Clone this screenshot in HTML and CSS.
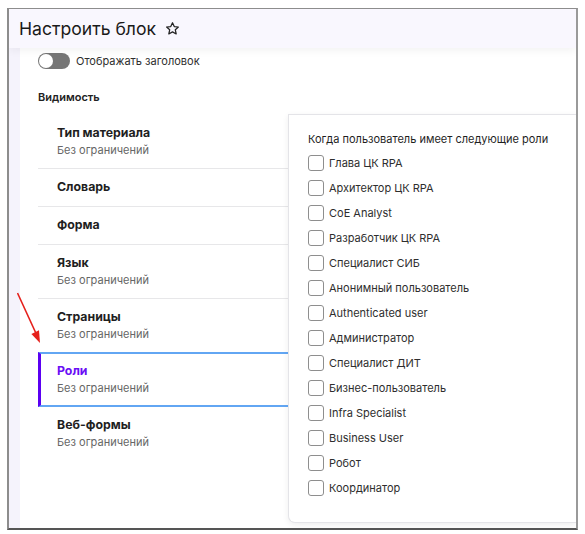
FILE: index.html
```html
<!DOCTYPE html>
<html lang="ru">
<head>
<meta charset="utf-8">
<link rel="stylesheet" href="styles.css">
</head>
<body>
<div class="frame">
  <header class="header">
    <h1 class="title">Настроить блок</h1>
    <svg class="star" width="15" height="15" viewBox="0 0 24 24"><path d="M12 2.8l2.8 6.1 6.6.7-4.9 4.5 1.4 6.6L12 17.4l-5.9 3.3 1.4-6.6-4.9-4.5 6.6-.7z" fill="none" stroke="#222" stroke-width="2" stroke-linejoin="round"/></svg>
  </header>
  <div class="body">
    <div class="strip"></div>
    <main class="main">
      <div class="toggle-row">
        <span class="toggle"><span class="knob"></span></span>
        <span class="toggle-label">Отображать заголовок</span>
      </div>
      <div class="section-title">Видимость</div>
      <div class="tabs-wrap">
        <ul class="tabs">
          <li class="tab"><div class="tab-title">Тип материала</div><div class="tab-sub">Без ограничений</div></li>
          <li class="tab"><div class="tab-title">Словарь</div></li>
          <li class="tab"><div class="tab-title">Форма</div></li>
          <li class="tab"><div class="tab-title">Язык</div><div class="tab-sub">Без ограничений</div></li>
          <li class="tab"><div class="tab-title">Страницы</div><div class="tab-sub">Без ограничений</div></li>
          <li class="tab active"><div class="tab-title">Роли</div><div class="tab-sub">Без ограничений</div></li>
          <li class="tab last"><div class="tab-title">Веб-формы</div><div class="tab-sub">Без ограничений</div></li>
        </ul>
        <section class="panel">
          <div class="panel-title">Когда пользователь имеет следующие роли</div>
          <label class="check"><span class="box"></span>Глава ЦК RPA</label>
          <label class="check"><span class="box"></span>Архитектор ЦК RPA</label>
          <label class="check"><span class="box"></span>CoE Analyst</label>
          <label class="check"><span class="box"></span>Разработчик ЦК RPA</label>
          <label class="check"><span class="box"></span>Специалист СИБ</label>
          <label class="check"><span class="box"></span>Анонимный пользователь</label>
          <label class="check"><span class="box"></span>Authenticated user</label>
          <label class="check"><span class="box"></span>Администратор</label>
          <label class="check"><span class="box"></span>Специалист ДИТ</label>
          <label class="check"><span class="box"></span>Бизнес-пользователь</label>
          <label class="check"><span class="box"></span>Infra Specialist</label>
          <label class="check"><span class="box"></span>Business User</label>
          <label class="check"><span class="box"></span>Робот</label>
          <label class="check"><span class="box"></span>Координатор</label>
        </section>
      </div>
    </main>
  </div>
  <svg class="arrow" width="40" height="60" viewBox="0 0 40 60">
    <line x1="0.5" y1="1" x2="18.6" y2="40.5" stroke="#e5201b" stroke-width="1.6"/>
    <path d="M23 51 L14.4 42 L22 38.3 Z" fill="#e5201b"/>
  </svg>
</div>
</body>
</html>
```
FILE: styles.css
```css
* { box-sizing: border-box; }
html, body { margin: 0; padding: 0; background: #fff; }
body { font-family: Inter, "Noto Sans", sans-serif; color: #222; }

.frame {
  position: relative;
  margin: 8px 0 0 7px;
  width: 571px;
  height: 522px;
  border-top: 1px solid #8d8d8d;
  border-left: 2px solid #8d8d8d;
  border-right: 2px solid #9a9a9a;
  border-bottom: 2px solid #555;
  background: #f5f3fc;
  overflow: hidden;
  display: flex;
  flex-direction: column;
}

.header {
  position: relative;
  z-index: 2;
  height: 39px;
  flex: none;
  background: #f9f7fe;
  display: flex;
  align-items: center;
  padding-left: 10px;
  gap: 9px;
  box-shadow: 0 3px 8px rgba(0, 0, 0, 0.05);
}
.title {
  margin: 0;
  font-size: 17.6px;
  font-weight: 400;
  color: #1a1a1a;
  line-height: 22px;
}

.body {
  flex: 1;
  display: flex;
  min-height: 0;
}
.strip { width: 11px; flex: none; background: #f5f3fc; }
.main {
  flex: 1;
  background: #fff;
  padding: 5px 0 0 18px;
}

.toggle-row { display: flex; align-items: center; height: 16px; gap: 6px; }
.toggle {
  width: 32px; height: 16px; border-radius: 8px;
  background: #767676; position: relative; display: block;
}
.knob {
  position: absolute; left: 1px; top: 1px;
  width: 14px; height: 14px; border-radius: 50%; background: #fff;
}
.toggle-label { font-size: 11px; color: #2e2e2e; }

.section-title {
  margin-top: 20px;
  font-size: 11px;
  font-weight: 600;
  color: #222;
  line-height: 16px;
}

.tabs-wrap {
  display: flex;
  align-items: flex-start;
  margin-top: 9px;
}
.tabs {
  list-style: none;
  margin: 1px 0 0;
  padding: 0;
  width: 252px;
  flex: none;
}
.tab {
  padding: 9px 0 10px 19px;
  border-bottom: 1px solid #e7e7e9;
}
.tab.last { border-bottom: none; }
.tab-title { font-size: 12.3px; font-weight: 700; line-height: 18px; color: #1f1f1f; }
.tab-sub { font-size: 11px; line-height: 16px; color: #666; }
.tab.active {
  padding-left: 16px;
  border-left: 3px solid #5b00f2;
  border-top: 2px solid #62a6f3;
  border-bottom: 2px solid #62a6f3;
  margin-top: -1px;
  padding-top: 8px;
  padding-bottom: 9px;
}
.tab.active .tab-title { color: #6a0ef5; }

.panel {
  margin-left: -2px;
  flex: 1;
  background: #fff;
  border: 1px solid #e4e4e8;
  border-right: none;
  border-bottom-left-radius: 7px;
  box-shadow: 0 2px 6px rgba(0, 0, 0, 0.07);
  padding: 16px 0 21px 19px;
  height: 409px;
}
.panel-title { font-size: 11px; line-height: 16px; color: #1f1f1f; margin-bottom: 3px; }
.check {
  display: flex; align-items: center; gap: 5px;
  height: 25px; font-size: 11px; color: #2e2e2e;
}
.box {
  width: 16px; height: 16px; border: 1px solid #8e8e8e; border-radius: 3px;
  flex: none; background: #fff;
}

.arrow {
  position: absolute;
  left: 8px;
  top: 283px;
}
```
